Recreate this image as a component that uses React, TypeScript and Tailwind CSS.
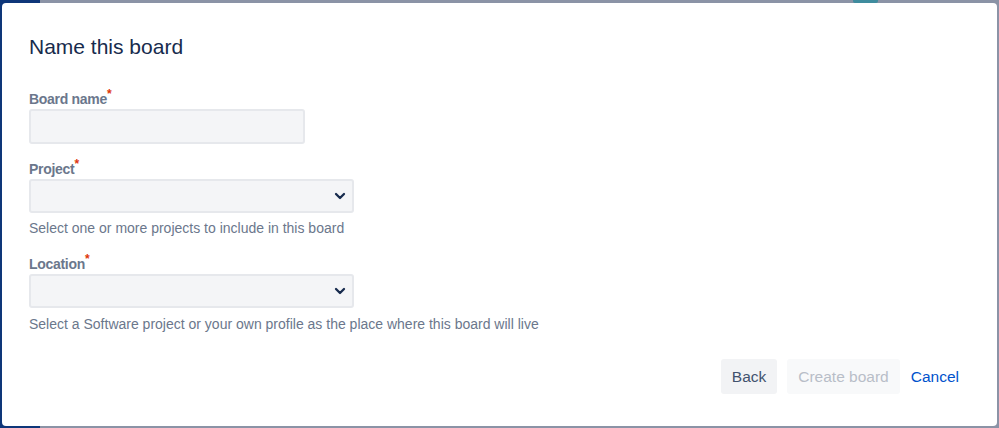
import * as React from "react";

const FONT = { fontFamily: '"Liberation Sans", Arial, sans-serif' };

function Chevron() {
  return (
    <svg width="12" height="8" viewBox="0 0 12 8" fill="none" aria-hidden>
      <path d="M2 2l4 4 4-4" stroke="#172b4d" strokeWidth="2.3" strokeLinecap="round" strokeLinejoin="round" />
    </svg>
  );
}

function Label({ text, className = "" }: { text: string; className?: string }) {
  return (
    <div className={`text-[14px] leading-[16px] font-bold tracking-[-0.3px] text-[#6b778c] ${className}`}>
      {text}
      <span className="relative -top-[6px] text-[12px] text-[#de350b]">*</span>
    </div>
  );
}

function SelectBox({ className = "" }: { className?: string }) {
  return (
    <div
      className={`flex h-[34px] w-[325px] items-center justify-end rounded-[3px] border-2 border-[#e6e8ec] bg-[#f4f5f7] pr-[6px] ${className}`}
    >
      <Chevron />
    </div>
  );
}

export default function App() {
  return (
    <div
      style={FONT}
      className="relative h-[428px] w-[999px] overflow-hidden bg-[linear-gradient(to_right,#0e3679_40px,#8b93a6_40px)] pt-[3px] px-[2px]"
    >
      {/* bits of the page showing behind the overlay */}
      <div className="absolute left-[853px] top-0 h-[3px] w-[25px] rounded-b-[2px] bg-[#3f8c9e]" />

      <div className="flex h-[423px] flex-col rounded-[4px] bg-white px-[27px] pt-[32px]">
        <h1 className="text-[21px] leading-[24px] font-normal text-[#172b4d]">Name this board</h1>

        <Label text="Board name" className="mt-[32px]" />
        <div className="mt-[1px] h-[35px] w-[276px] rounded-[3px] border-2 border-[#e6e8ec] bg-[#f4f5f7]" />

        <Label text="Project" className="mt-[17px]" />
        <SelectBox className="mt-[1px]" />
        <p className="mt-[5px] text-[14px] leading-[20px] text-[#6b778c]">
          Select one or more projects to include in this board
        </p>

        <Label text="Location" className="mt-[18px]" />
        <SelectBox className="mt-[1px]" />
        <p className="mt-[6px] text-[14px] leading-[20px] text-[#6b778c]">
          Select a Software project or your own profile as the place where this board will live
        </p>

        <div className="mt-[25px] flex justify-end">
          <button className="h-[35px] rounded-[3px] bg-[#f2f3f5] px-[11px] text-[15.5px] text-[#42526e]">Back</button>
          <button
            disabled
            className="ml-[10px] h-[35px] rounded-[3px] bg-[#f8f9fa] px-[11px] text-[15.5px] text-[#b8bec8]"
          >
            Create board
          </button>
          <button className="h-[35px] rounded-[3px] px-[11px] text-[15.5px] text-[#0052cc]">Cancel</button>
        </div>
      </div>
    </div>
  );
}
